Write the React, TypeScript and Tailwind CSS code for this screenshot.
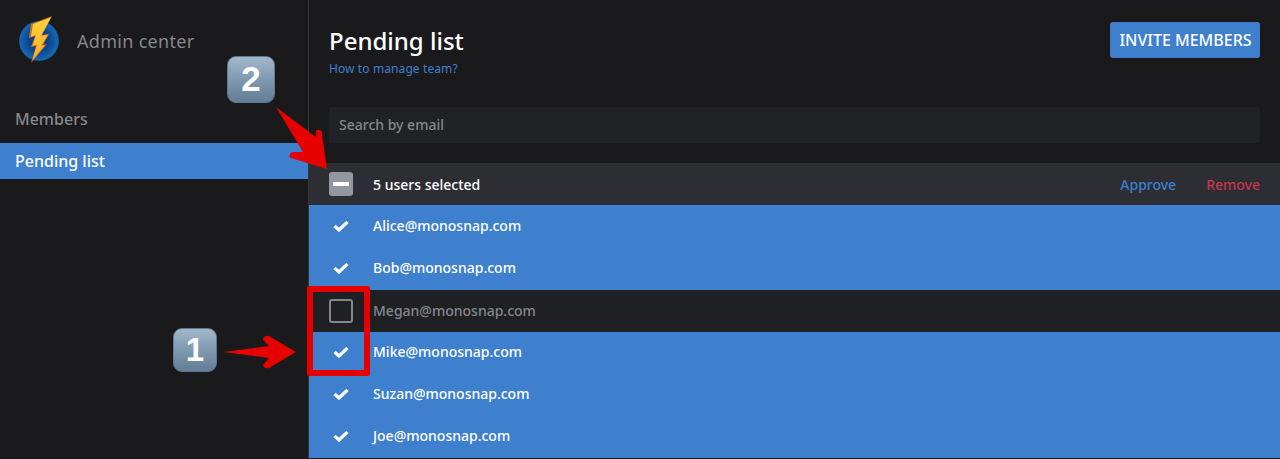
const SANS = "font-['Noto_Sans',sans-serif]";

const EMAILS = [
  { email: "Alice@monosnap.com", on: true, row: "h-[42px]" },
  { email: "Bob@monosnap.com", on: true, row: "h-[43px] pb-px" },
  { email: "Megan@monosnap.com", on: false, row: "h-[42px]" },
  { email: "Mike@monosnap.com", on: true, row: "h-[42px] pb-[2px]" },
  { email: "Suzan@monosnap.com", on: true, row: "h-[42px] pb-[2px]" },
  { email: "Joe@monosnap.com", on: true, row: "h-[42px] pb-[2px]" },
];

function Logo() {
  return (
    <svg width="46" height="50" viewBox="0 0 46 50" className="shrink-0">
      <defs>
        <radialGradient id="globe" cx="50%" cy="50%" r="55%">
          <stop offset="0%" stopColor="#0a2a66" />
          <stop offset="55%" stopColor="#0d4a96" />
          <stop offset="85%" stopColor="#1668b0" />
          <stop offset="100%" stopColor="#0b2c63" />
        </radialGradient>
        <linearGradient id="bolt" x1="0" y1="0" x2="0" y2="1">
          <stop offset="0%" stopColor="#ffd23c" />
          <stop offset="100%" stopColor="#fbb02a" />
        </linearGradient>
      </defs>
      <circle cx="23" cy="26" r="20" fill="url(#globe)" />
      <path d="M15 9 L36 1 L26 20 L33 19 L27 30 L31 29 L15 48 L20 31 L15 32 L19 21 L13 23 Z" fill="#c8701c" />
      <path d="M17 9 L35 2.5 L25 21 L32 19.5 L25 31 L29 30 L16.5 45 L21 29.5 L16.5 31 L20 20 L15 22 Z" fill="url(#bolt)" />
    </svg>
  );
}

function Keycap({ n, className }: { n: string; className: string }) {
  return (
    <div
      className={`absolute flex items-center justify-center rounded-[9px] border border-[#5d7890] bg-gradient-to-b from-[#a3b8cb] via-[#7f99b1] to-[#627d96] font-['Liberation_Sans',sans-serif] font-bold text-white ${className}`}
    >
      {n}
    </div>
  );
}

function Check() {
  return (
    <svg width="16" height="12" viewBox="0 0 16 12" fill="none">
      <path d="M1.5 6 L6 10 L14.5 2" stroke="white" strokeWidth="3.2" />
    </svg>
  );
}

export default function App() {
  return (
    <div className={`relative flex h-[459px] w-[1280px] overflow-hidden bg-[#1a1a1c] ${SANS}`}>
      {/* sidebar */}
      <aside className="w-[309px] shrink-0 border-r border-[#333539]">
        <div className="flex h-[101px] items-start pl-[16px] pt-[15px]">
          <Logo />
          <span className="ml-[15px] mt-[14px] text-[18px] leading-6 tracking-[0.3px] text-[#85878d]">Admin center</span>
        </div>
        <div className="flex h-[36px] items-center pl-[15px] text-[16px] font-medium text-[#85878d]">Members</div>
        <div className="mt-[6px] flex h-[36px] items-center bg-[#3e7fce] pl-[15px] text-[16px] font-medium text-white">Pending list</div>
      </aside>

      {/* main */}
      <main className="flex-1">
        <div className="flex h-[107px] items-start justify-between px-[20px]">
          <div className="pt-[24px]">
            <h1 className="text-[24px] leading-[34px] font-medium text-white">Pending list</h1>
            <a className="mt-[3px] block text-[12px] leading-[16px] tracking-[0.1px] text-[#3e7fce]">How to manage team?</a>
          </div>
          <button className="mt-[22px] h-[36px] w-[150px] rounded-[3px] bg-[#3e7fce] pl-[1px] text-[16px] font-medium text-white">
            INVITE MEMBERS
          </button>
        </div>

        <div className="px-[20px]">
          <div className="flex h-[36px] items-center rounded-[3px] bg-[#212226] pb-[2px] pl-[10px] text-[14px] font-medium text-[#85878d]">
            Search by email
          </div>
        </div>

        <div className="mt-[20px] flex h-[42px] items-center bg-[#2c2e33] pr-[20px] pl-[20px]">
          <div className="flex h-[24px] w-[24px] items-center justify-center rounded-[3px] bg-[#9497a0]">
            <div className="h-[4px] w-[16px] bg-white" />
          </div>
          <span className="ml-[20px] flex-1 text-[14px] font-medium text-white">5 users selected</span>
          <span className="text-[14px] font-medium text-[#3e7fce]">Approve</span>
          <span className="ml-[30px] text-[14px] font-medium text-[#c5354f]">Remove</span>
        </div>

        {EMAILS.map((r) => (
          <div
            key={r.email}
            className={`flex items-center pl-[20px] text-[14px] font-medium ${r.row} ${r.on ? "bg-[#3e7fce] text-white" : "bg-[#1f2024] text-[#85878d]"}`}
          >
            <div className="flex h-[24px] w-[24px] items-center justify-center">
              {r.on ? <Check /> : <div className="h-[24px] w-[24px] rounded-[3px] border-2 border-[#85878d]" />}
            </div>
            <span className="ml-[20px] pb-[2px]">{r.email}</span>
          </div>
        ))}
      </main>

      {/* annotations */}
      <Keycap n="2" className="left-[227px] top-[56px] h-[47px] w-[48px] text-[35px]" />
      <Keycap n="1" className="left-[173px] top-[328px] h-[44px] w-[44px] text-[33px]" />

      <svg className="absolute left-0 top-0 pointer-events-none" width="1280" height="459" viewBox="0 0 1280 459">
        <path
          d="M276 107 L316 137 L316 131 Q316 129 320 130 Q322 130 322 134 L327 169 L291 158 Q289 157 290 154 Q291 152 294 152 L303 152 Z"
          fill="#e60000"
        />
        <path
          d="M223 352 L269 346 L263 340 Q264 335 269 336 L296 352 L269 368 Q264 369 263 365 L269 358 Z"
          fill="#e60000"
        />
      </svg>
      <div className="absolute left-[307px] top-[286px] h-[90px] w-[63px] rounded-[2px] border-[6px] border-[#e60000]" />
    </div>
  );
}
